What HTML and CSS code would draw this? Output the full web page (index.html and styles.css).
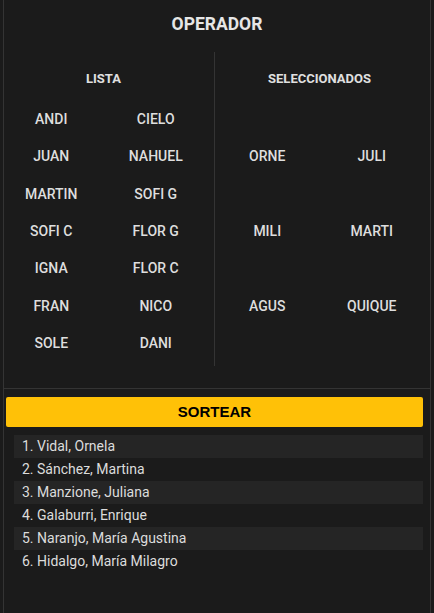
FILE: index.html
```html
<!DOCTYPE html>
<html lang="es">
<head>
<meta charset="utf-8">
<title>Operador</title>
<link rel="stylesheet" href="styles.css">
</head>
<body>
<div class="frame">
  <h1 class="title">OPERADOR</h1>
  <div class="columns">
    <section class="col col-left">
      <div class="col-inner">
        <h2 class="heading">LISTA</h2>
        <div class="names">
          <div class="name">ANDI</div><div class="name">CIELO</div>
          <div class="name">JUAN</div><div class="name">NAHUEL</div>
          <div class="name">MARTIN</div><div class="name">SOFI G</div>
          <div class="name">SOFI C</div><div class="name">FLOR G</div>
          <div class="name">IGNA</div><div class="name">FLOR C</div>
          <div class="name">FRAN</div><div class="name">NICO</div>
          <div class="name">SOLE</div><div class="name">DANI</div>
        </div>
      </div>
    </section>
    <section class="col col-right">
      <div class="col-inner">
        <h2 class="heading">SELECCIONADOS</h2>
        <div class="names names-selected">
          <div class="name">ORNE</div><div class="name">JULI</div>
          <div class="name">MILI</div><div class="name">MARTI</div>
          <div class="name">AGUS</div><div class="name">QUIQUE</div>
        </div>
      </div>
    </section>
  </div>
  <div class="bottom">
    <button class="btn">SORTEAR</button>
    <ol class="results">
      <li class="row">1. Vidal, Ornela</li>
      <li class="row">2. Sánchez, Martina</li>
      <li class="row">3. Manzione, Juliana</li>
      <li class="row">4. Galaburri, Enrique</li>
      <li class="row">5. Naranjo, María Agustina</li>
      <li class="row">6. Hidalgo, María Milagro</li>
    </ol>
  </div>
</div>
</body>
</html>
```
FILE: styles.css
```css
html, body {
  margin: 0;
  padding: 0;
  background: #1b1b1b;
  height: 100%;
}
body {
  font-family: Roboto, "Liberation Sans", sans-serif;
  color: #e2e2e2;
}
.frame {
  margin: 0 3px;
  min-height: 100%;
  border-left: 1px solid #343434;
  border-right: 1px solid #343434;
  box-sizing: border-box;
}
.title {
  margin: 0;
  padding-top: 12px;
  height: 24px;
  line-height: 24px;
  font-size: 17.5px;
  font-weight: 700;
  text-align: center;
  color: #e6e6e6;
  margin-bottom: 16px;
}
.columns {
  display: flex;
  padding-bottom: 22px;
  border-bottom: 1px solid #343434;
}
.col {
  padding-bottom: 4px;
}
.col-left {
  width: 210px;
  border-right: 1px solid #343434;
}
.col-left .col-inner {
  margin-left: -5px;
  width: 209px;
}
.col-right {
  flex: 1;
  display: flex;
}
.col-right .col-inner {
  width: 209px;
  display: flex;
  flex-direction: column;
}
.heading {
  margin: 17.5px 0 14px;
  line-height: 17px;
  font-size: 13px;
  font-weight: 700;
  text-align: center;
  color: #e0e0e0;
}
.names {
  display: grid;
  grid-template-columns: 1fr 1fr;
  grid-auto-rows: 37.33px;
}
.names-selected {
  flex: 1;
  row-gap: 37.33px;
  align-content: center;
}
.name {
  display: flex;
  align-items: center;
  justify-content: center;
  font-size: 14px;
  font-weight: 500;
  color: #dedede;
}
.bottom {
  padding: 8px 7px 0 2px;
}
.btn {
  display: block;
  width: 100%;
  height: 30px;
  border: 0;
  border-radius: 2px;
  background: #ffc107;
  color: #000;
  font-family: "Liberation Sans", Arial, sans-serif;
  font-weight: 700;
  font-size: 15px;
  padding: 0;
}
.results {
  list-style: none;
  margin: 8px 0 0 8px;
  padding: 0;
}
.row {
  height: 23px;
  line-height: 23px;
  padding-left: 8px;
  font-size: 14px;
  color: #dcdcdc;
}
.row:nth-child(odd) {
  background: #252525;
}
```
